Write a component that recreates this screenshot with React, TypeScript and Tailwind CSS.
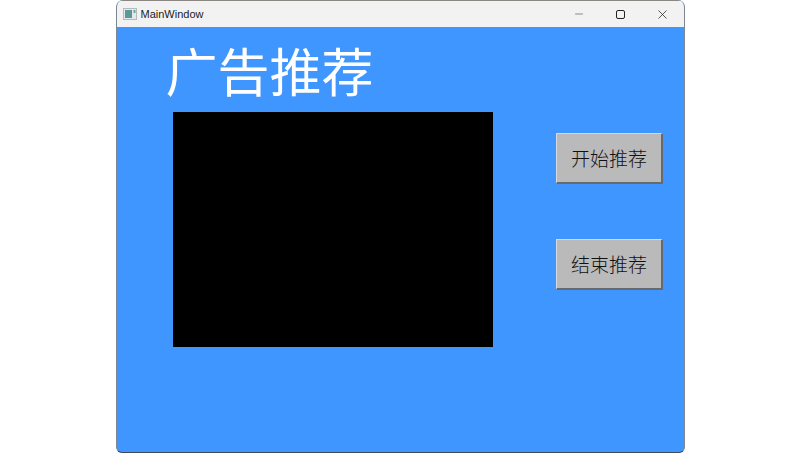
import React from 'react';
import { Minus, X } from 'lucide-react';

function PushButton({ label }: { label: string }) {
    return (
        <button className="w-[107px] h-[51px] pb-[2px] pl-[1px] bg-[#bababa] border-t border-l border-r-2 border-b-2 border-t-[#d8d8e0] border-l-[#d8d8e0] border-r-[#666a6e] border-b-[#666a6e] text-[19px] leading-none text-[#111111] font-['Noto_Sans_CJK_SC',sans-serif] font-light">
            {label}
        </button>
    );
}

function WindowIcon() {
    return (
        <svg width="14" height="12" viewBox="0 0 14 12" className="shrink-0">
            <rect x="0.5" y="0.5" width="13" height="11" fill="#e4e8ea" stroke="#b4babd" />
            <rect x="2" y="2" width="7" height="8" fill="#5b9a94" />
            <rect x="10.5" y="2" width="2" height="3" fill="#6ba8a3" />
        </svg>
    );
}

export default function App() {
    return (
        <div className="w-[800px] h-[453px] bg-white flex justify-center overflow-hidden">
            <div className="w-[569px] h-[453px] flex flex-col rounded-t-[7px] rounded-b-[6px] overflow-hidden border-x border-b border-x-[#7b8794] border-b-[#3d4a5c] bg-[#4096ff]">
                <div className="h-[27px] shrink-0 bg-[#f2f2f2] border-t border-t-[#8a8682] flex items-center pl-[6px] text-[#1c1c1c]">
                    <WindowIcon />
                    <span className="ml-[4px] text-[11px] font-['Liberation_Sans',sans-serif]">MainWindow</span>
                    <div className="ml-auto flex items-center">
                        <div className="w-[41px] flex justify-center">
                            <Minus size={12} strokeWidth={1.2} color="#444444" />
                        </div>
                        <div className="w-[42px] flex justify-center pr-[1px]">
                            <div className="w-[9px] h-[9px] border-[1.5px] border-[#222222] rounded-[2px]" />
                        </div>
                        <div className="w-[42px] flex justify-center">
                            <X size={15} strokeWidth={1.2} color="#222222" />
                        </div>
                    </div>
                </div>
                <div className="flex-1 flex flex-col pl-[49px]">
                    <h1 className="h-[85px] text-[52px] leading-[85px] text-white font-normal font-['Noto_Sans_CJK_SC',sans-serif]">
                        广告推荐
                    </h1>
                    <div className="flex pl-[7px]">
                        <div className="w-[320px] h-[235px] bg-black" />
                        <div className="ml-[63px] pt-[21px] flex flex-col gap-[55px]">
                            <PushButton label="开始推荐" />
                            <PushButton label="结束推荐" />
                        </div>
                    </div>
                </div>
            </div>
        </div>
    );
}
